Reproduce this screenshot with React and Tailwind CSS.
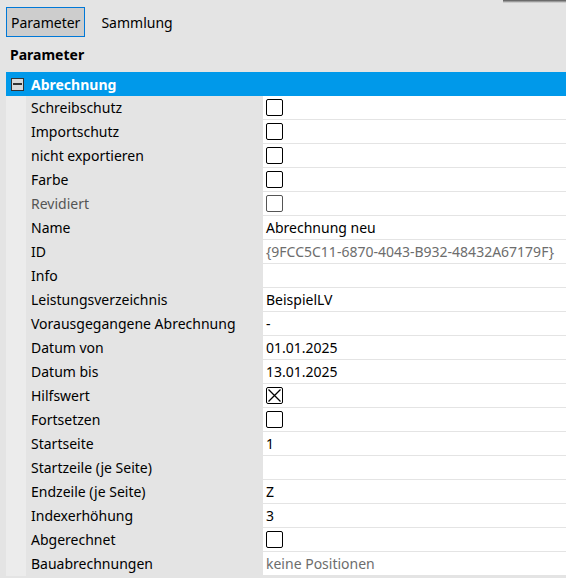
const rows = [
  { label: "Schreibschutz", type: "check" },
  { label: "Importschutz", type: "check" },
  { label: "nicht exportieren", type: "check" },
  { label: "Farbe", type: "check" },
  { label: "Revidiert", type: "check", disabled: true },
  { label: "Name", value: "Abrechnung neu" },
  { label: "ID", value: "{9FCC5C11-6870-4043-B932-48432A67179F}", gray: true },
  { label: "Info", value: "" },
  { label: "Leistungsverzeichnis", value: "BeispielLV" },
  { label: "Vorausgegangene Abrechnung", value: "-" },
  { label: "Datum von", value: "01.01.2025" },
  { label: "Datum bis", value: "13.01.2025" },
  { label: "Hilfswert", type: "check", checked: true },
  { label: "Fortsetzen", type: "check" },
  { label: "Startseite", value: "1" },
  { label: "Startzeile (je Seite)", value: "" },
  { label: "Endzeile (je Seite)", value: "Z" },
  { label: "Indexerhöhung", value: "3" },
  { label: "Abgerechnet", type: "check" },
  { label: "Bauabrechnungen", value: "keine Positionen", gray: true },
];

const CheckBox = ({ checked, disabled }) => (
  <div
    className={`w-[17px] h-[17px] rounded-[2px] border-[1.5px] bg-white flex items-center justify-center ${
      disabled ? "border-[#555]" : "border-black"
    }`}
  >
    {checked && (
      <svg width="13" height="13" viewBox="0 0 13 13">
        <path d="M0.5 0.5 L12.5 12.5 M12.5 0.5 L0.5 12.5" stroke="black" strokeWidth="1.3" />
      </svg>
    )}
  </div>
);

const App = () => {
  return (
    <div
      className="w-[566px] h-[578px] bg-[#e4e4e4] overflow-hidden relative text-[14px] text-black"
      style={{ fontFamily: '"Noto Sans", sans-serif' }}
    >
      {/* top-right edge */}
      <div className="absolute top-0 left-[503px] right-0 h-[3px] bg-gradient-to-b from-[#555] to-[#e4e4e4]" />

      {/* tabs */}
      <div className="flex items-center pt-[7px] pl-[6px] h-[37px]">
        <div className="h-[30px] px-[4px] flex items-center bg-[#cdcdcd] border border-[#0078d7]">
          Parameter
        </div>
        <div className="ml-[16px] flex items-center">Sammlung</div>
      </div>

      <div className="pl-[10px] h-[35px] flex items-center font-bold">Parameter</div>

      {/* group header */}
      <div className="ml-[6px] h-[24px] bg-[#0099ea] flex items-center">
        <div className="ml-[5px] w-[13px] h-[13px] bg-[#d9d9d9] border border-[#333] flex items-center justify-center">
          <div className="w-[9px] h-[2px] bg-[#333]" />
        </div>
        <span className="ml-[7px] text-white font-bold">Abrechnung</span>
      </div>

      {/* rows */}
      <div className="ml-[6px] flex flex-col">
        {rows.map((r) => (
          <div key={r.label} className="flex h-[24px]">
            <div className="w-[20px] bg-[#ececec]" />
            <div
              className={`w-[237px] pl-[5px] pb-[1px] flex items-center ${
                r.disabled ? "text-[#555]" : "text-black"
              }`}
            >
              {r.label}
            </div>
            <div className="flex-1 bg-white border-b border-[#e4e4e4] flex items-center pl-[3px]">
              {r.type === "check" ? (
                <CheckBox checked={r.checked} disabled={r.disabled} />
              ) : (
                <span className={r.gray ? "text-[#6d6d6d]" : "text-black"}>{r.value}</span>
              )}
            </div>
          </div>
        ))}
      </div>
    </div>
  );
};

export default App;
